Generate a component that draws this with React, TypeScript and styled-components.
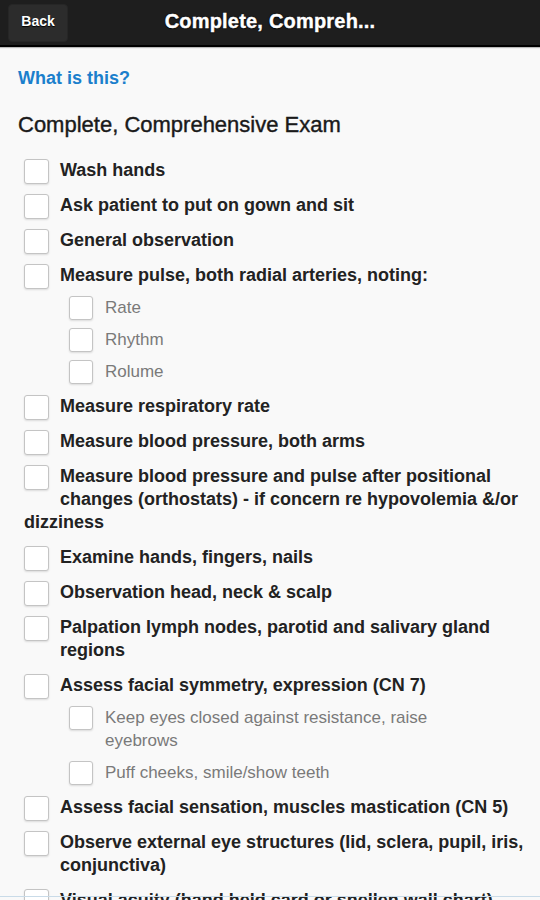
import React from "react";
import styled, { createGlobalStyle } from "styled-components";

const GlobalStyle = createGlobalStyle`
  html, body {
    margin: 0;
    padding: 0;
    background: #f9f9f9;
  }
  body {
    font-family: "Liberation Sans", Arial, sans-serif;
  }
`;

type Step = { text: string; sub?: boolean };

const steps: Step[] = [
  { text: "Wash hands" },
  { text: "Ask patient to put on gown and sit" },
  { text: "General observation" },
  { text: "Measure pulse, both radial arteries, noting:" },
  { text: "Rate", sub: true },
  { text: "Rhythm", sub: true },
  { text: "Rolume", sub: true },
  { text: "Measure respiratory rate" },
  { text: "Measure blood pressure, both arms" },
  {
    text: "Measure blood pressure and pulse after positional changes (orthostats) - if concern re hypovolemia &/or dizziness",
  },
  { text: "Examine hands, fingers, nails" },
  { text: "Observation head, neck & scalp" },
  { text: "Palpation lymph nodes, parotid and salivary gland regions" },
  { text: "Assess facial symmetry, expression (CN 7)" },
  { text: "Keep eyes closed against resistance, raise eyebrows", sub: true },
  { text: "Puff cheeks, smile/show teeth", sub: true },
  { text: "Assess facial sensation, muscles mastication (CN 5)" },
  { text: "Observe external eye structures (lid, sclera, pupil, iris, conjunctiva)" },
  { text: "Visual acuity (hand held card or snellen wall chart)" },
];

const App: React.FC = () => {
  return (
    <Page>
      <GlobalStyle />
      <Header>
        <BackButton>Back</BackButton>
        <Title>Complete, Compreh...</Title>
      </Header>

      <Content>
        <HelpLink href="#">What is this?</HelpLink>
        <Heading>Complete, Comprehensive Exam</Heading>

        <List>
          {steps.map((s, i) => (
            <Row key={i} $sub={!!s.sub}>
              <Box $sub={!!s.sub} />
              {s.text}
            </Row>
          ))}
        </List>
      </Content>
      <BottomEdge />
    </Page>
  );
};

export default App;

const Page = styled.div`
  height: 900px;
  overflow: hidden;
  position: relative;
  background: #f9f9f9;
`;

const Header = styled.header`
  height: 45px;
  background: #1e1e1e;
  border-bottom: 2px solid #000;
  box-shadow: 0 1px 1px rgba(0, 0, 0, 0.25);
  display: flex;
  align-items: center;
  position: relative;
`;

const BackButton = styled.button`
  position: absolute;
  left: 8px;
  top: 4px;
  width: 60px;
  height: 38px;
  padding: 0 0 4px;
  border: 1px solid #262626;
  border-radius: 4px;
  background: #2c2c2c;
  color: #fff;
  font-family: "Liberation Sans", Arial, sans-serif;
  font-weight: bold;
  font-size: 14px;
  text-shadow: 0 1px 1px #000;
`;

const Title = styled.h1`
  margin: 0 0 2px;
  flex: 1;
  text-align: center;
  color: #fff;
  font-size: 20px;
  font-weight: bold;
  letter-spacing: 0.2px;
  white-space: nowrap;
  -webkit-text-stroke: 0.4px #fff;
  text-shadow: 0 1px 1px #000, 0 0 2px #000;
`;

const Content = styled.main`
  padding: 20px 8px 0 18px;
`;

const HelpLink = styled.a`
  display: block;
  color: #1b7fcc;
  font-weight: bold;
  font-size: 18px;
  line-height: 22px;
  text-decoration: none;
`;

const Heading = styled.h2`
  margin: 24px 0 0;
  font-size: 22px;
  line-height: 24px;
  font-weight: normal;
  color: #1a1a1a;
  -webkit-text-stroke: 0.4px #1a1a1a;
`;

const List = styled.div`
  padding: 10px 0 0 6px;
`;

const Row = styled.div<{ $sub: boolean }>`
  margin-top: ${(p) => (p.$sub ? "9px" : "12px")};
  padding: ${(p) => (p.$sub ? "0 60px 0 45px" : "0")};
  font-size: ${(p) => (p.$sub ? "17px" : "18px")};
  line-height: 23px;
  font-weight: ${(p) => (p.$sub ? "normal" : "bold")};
  color: ${(p) => (p.$sub ? "#7a7a7a" : "#222")};
`;

const Box = styled.span<{ $sub: boolean }>`
  float: left;
  box-sizing: border-box;
  width: ${(p) => (p.$sub ? "24px" : "25px")};
  height: ${(p) => (p.$sub ? "24px" : "25px")};
  margin-right: ${(p) => (p.$sub ? "12px" : "11px")};
  margin-bottom: 2px;
  border: 1px solid #c4c4c4;
  border-radius: 3px;
  background: #fff;
  box-shadow: 0 1px 2px rgba(0, 0, 0, 0.12);
`;

const BottomEdge = styled.div`
  position: absolute;
  left: 0;
  right: 0;
  bottom: 3px;
  height: 1px;
  background: #c9dbe8;
`;
